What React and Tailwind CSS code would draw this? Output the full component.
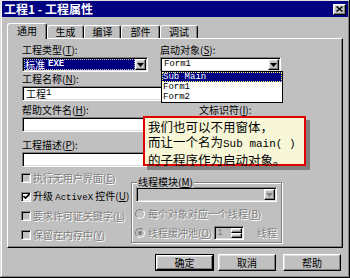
import React from "react";

const sunken =
  "border border-t-[#808080] border-l-[#808080] border-b-white border-r-white shadow-[inset_1px_1px_0_#000,inset_-1px_-1px_0_#dfdfdf]";
const raised =
  "border border-t-white border-l-white border-b-black border-r-black shadow-[inset_-1px_-1px_0_#808080,inset_1px_1px_0_#dfdfdf]";
const dim = "text-[#808080] [text-shadow:1px_1px_0_#fff]";
const mono = "font-['Liberation_Mono',monospace]";

function Arrow({ disabled }) {
  return (
    <svg width="7" height="4" viewBox="0 0 7 4">
      <path d="M0 0h7L3.5 4z" fill={disabled ? "#808080" : "#000"} />
    </svg>
  );
}

function DropButton({ disabled }) {
  return (
    <div className={`${raised} w-[11px] h-full shrink-0 flex items-center justify-center bg-[#c0c0c0]`}>
      <Arrow disabled={disabled} />
    </div>
  );
}

function Label({ text, k, className = "" }) {
  return (
    <div className={`h-[14px] leading-[14px] text-[10px] whitespace-nowrap ${className}`}>
      {text}(<u>{k}</u>):
    </div>
  );
}

function Field({ className = "", children }) {
  return (
    <div className={`${sunken} h-[15px] p-[1px] bg-white flex ${className}`}>{children}</div>
  );
}

function Check({ label, k, checked, disabled, extra }) {
  return (
    <div className="h-[19px] flex items-center -ml-[1px]">
      <div
        className={`${sunken} w-[10px] h-[10px] flex items-center justify-center ${
          disabled ? "bg-[#c0c0c0]" : "bg-white"
        }`}
      >
        {checked && (
          <svg width="7" height="7" viewBox="0 0 7 7">
            <path d="M0.5 3l2 2L6.5 1" stroke="#000" strokeWidth="1.6" fill="none" />
          </svg>
        )}
      </div>
      <div className={`ml-[2px] text-[10px] leading-[12px] whitespace-nowrap ${disabled ? dim : "text-black"}`}>
        {label}
        {extra}(<u>{k}</u>)
      </div>
    </div>
  );
}

function Radio({ on }) {
  return (
    <div className="w-[10px] h-[10px] rounded-full border border-t-[#808080] border-l-[#808080] border-b-white border-r-white bg-[#c0c0c0] flex items-center justify-center shrink-0">
      {on && <div className="w-[4px] h-[4px] rounded-full bg-[#808080]" />}
    </div>
  );
}

function Btn({ text, def, className = "" }) {
  return (
    <div className={`h-[17px] ${def ? "border border-black" : ""} ${className}`}>
      <div className={`${raised} h-full flex items-center justify-center text-[10px] leading-none bg-[#c0c0c0]`}>
        {text}
      </div>
    </div>
  );
}

export default function App() {
  const tabs = [
    { t: "生成", w: "w-[37px]" },
    { t: "编译", w: "w-[37px]" },
    { t: "部件", w: "w-[39px]" },
    { t: "调试", w: "w-[38px]" },
  ];

  return (
    <div className="relative w-[350px] h-[278px] bg-[#c0c0c0] px-[2px] pt-[1px] flex flex-col font-['Noto_Sans_CJK_SC',sans-serif] text-black shadow-[inset_-1px_-1px_0_#000,inset_1px_1px_0_#dfdfdf,inset_-2px_-2px_0_#808080,inset_2px_2px_0_#fff] overflow-hidden">
      {/* title bar */}
      <div className="h-[16px] bg-[#000080] flex items-center justify-between pl-[2px] pr-[2px]">
        <span className="text-white font-bold text-[12px] leading-none whitespace-nowrap">
          工程1 - 工程属性
        </span>
        <div className={`${raised} w-[13px] h-[11px] bg-[#c0c0c0] flex items-center justify-center`}>
          <svg width="7" height="6" viewBox="0 0 7 6">
            <path d="M0.5 0.5l6 5M6.5 0.5l-6 5" stroke="#000" strokeWidth="1.4" />
          </svg>
        </div>
      </div>

      {/* tabs */}
      <div className="mt-[6px] ml-[5px] h-[16px] -mb-[1px] flex items-end relative z-10">
        <div className="w-[40px] h-[16px] bg-[#c0c0c0] border-l border-t border-white border-r border-r-black rounded-t-[3px] shadow-[inset_-1px_0_0_#808080] flex items-start justify-center pt-[2px] text-[10px] leading-[10px]">
          通用
        </div>
        {tabs.map((tb) => (
          <div
            key={tb.t}
            className={`${tb.w} h-[13px] mb-[1px] border-l border-t border-white border-r border-r-black rounded-t-[3px] shadow-[inset_-1px_0_0_#808080] flex items-center justify-center text-[10px] leading-[10px]`}
          >
            {tb.t}
          </div>
        ))}
      </div>

      {/* panel */}
      <div className="ml-[5px] w-[336px] h-[210px] border border-t-white border-l-white border-b-black border-r-black shadow-[inset_-1px_-1px_0_#808080] pl-[14px] pt-[4px] flex flex-col">
        <div className="grid grid-cols-[126px_121px] gap-x-[12px]">
          <Label text="工程类型" k="T" />
          <Label text="启动对象" k="S" />
          <Field>
            <div className="flex-1 bg-[#000080] text-white flex items-center pl-[1px] outline outline-1 outline-dotted outline-[#c0c0c0] -outline-offset-1 text-[10px] leading-none whitespace-nowrap">
              标准 <span className={`${mono} font-bold text-[9px] ml-[3px]`}>EXE</span>
            </div>
            <DropButton />
          </Field>
          <Field>
            <div className={`flex-1 flex items-center pl-[2px] ${mono} text-[9px] leading-none`}>Form1</div>
            <DropButton />
          </Field>
        </div>

        <Label text="工程名称" k="N" />
        <Field className="w-[200px]">
          <div className="flex items-center pl-[2px] text-[10px] leading-none whitespace-nowrap">
            工程<span className={`${mono} text-[9px]`}>1</span>
          </div>
        </Field>

        <div className="mt-[2px] flex">
          <Label text="帮助文件名" k="H" className="w-[177px]" />
          <Label text="文标识符" k="I" />
        </div>
        <div className="flex">
          <Field className="w-[160px]" />
          <Field className="w-[84px] ml-[17px]" />
        </div>

        <Label text="工程描述" k="P" className="mt-[6px]" />
        <Field className="w-[261px]" />

        <div className="mt-[1px] flex">
          <div className="w-[109px] flex flex-col">
            <Check label="执行无用户界面" k="E" disabled />
            <Check
              label="升级 "
              extra={
                <>
                  <span className={`${mono} text-[9px]`}>ActiveX</span> 控件
                </>
              }
              k="U"
              checked
            />
            <Check label="要求许可证关键字" k="L" disabled />
            <Check label="保留在内存中" k="Y" disabled />
          </div>

          <div className="relative mt-[14px] w-[151px] h-[61px] border border-[#808080] shadow-[1px_1px_0_#fff,inset_1px_1px_0_#fff] px-[4px] pt-[4px] flex flex-col">
            <div className="absolute -top-[7px] left-[5px] bg-[#c0c0c0] px-[1px] text-[10px] leading-[12px] whitespace-nowrap">
              线程模块(<u>M</u>)
            </div>
            <div className={`${sunken} h-[15px] p-[1px] bg-[#c0c0c0] flex justify-end`}>
              <DropButton disabled />
            </div>
            <div className="mt-[5px] h-[14px] flex items-center -ml-[1px]">
              <Radio />
              <span className={`ml-[3px] text-[10px] leading-none whitespace-nowrap ${dim}`}>
                每个对象对应一个线程(<u>B</u>)
              </span>
            </div>
            <div className="mt-[4px] h-[16px] flex items-center -ml-[1px]">
              <Radio on />
              <span className={`ml-[3px] text-[10px] leading-none whitespace-nowrap ${dim}`}>
                线程缓冲池(<u>O</u>)
              </span>
              <div className={`${sunken} ml-[2px] w-[35px] h-[14px] p-[1px] bg-[#c0c0c0] flex`}>
                <div className={`flex-1 pl-[1px] ${mono} text-[9px] leading-[10px] text-[#808080]`}>1</div>
                <div className="w-[11px] flex flex-col">
                  <div className={`${raised} flex-1`} />
                  <div className={`${raised} flex-1`} />
                </div>
              </div>
              <span className={`ml-[13px] text-[10px] leading-none whitespace-nowrap ${dim}`}>线程</span>
            </div>
          </div>
        </div>
      </div>

      {/* buttons */}
      <div className="mt-[6px] flex ml-[153px]">
        <Btn text="确定" def className="w-[59px]" />
        <Btn text="取消" className="w-[58px] ml-[4px]" />
        <Btn text="帮助" className="w-[58px] ml-[7px]" />
      </div>

      {/* open dropdown list */}
      <div className="absolute left-[161px] top-[71px] w-[122px] h-[32px] border border-black bg-white z-20 flex flex-col">
        <div className={`h-[10px] bg-[#000080] text-white ${mono} text-[9px] leading-[10px] pl-[1px] outline outline-1 outline-dotted outline-[#ffff80] -outline-offset-1`}>
          Sub Main
        </div>
        <div className={`h-[10px] ${mono} text-[9px] leading-[10px] pl-[1px]`}>Form1</div>
        <div className={`h-[10px] ${mono} text-[9px] leading-[10px] pl-[1px]`}>Form2</div>
      </div>

      {/* callout */}
      <div className="absolute left-[143px] top-[116px] w-[163px] h-[50px] border-2 border-[#e00000] bg-[#f7f7d7] shadow-[4px_4px_0_#808080] pl-[3px] pt-[1px] z-30 text-[12.5px] leading-[15px] whitespace-nowrap">
        <div>我们也可以不用窗体，</div>
        <div>
          而让一个名为<span className={`${mono} text-[11px]`}>Sub main( )</span>
        </div>
        <div>的子程序作为启动对象。</div>
      </div>
    </div>
  );
}
